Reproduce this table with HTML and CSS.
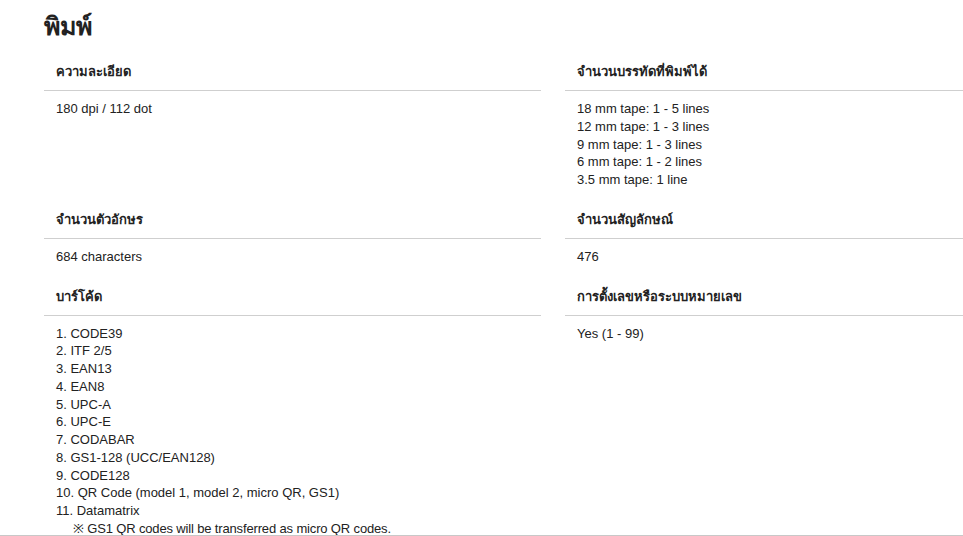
FILE: index.html
```html
<!DOCTYPE html>
<html lang="th">
<head>
<meta charset="utf-8">
<link rel="stylesheet" href="styles.css">
</head>
<body>
<div class="page">
  <h1 class="title">พิมพ์</h1>
  <div class="grid">
    <div class="cell">
      <div class="label">ความละเอียด</div>
      <div class="value">180 dpi / 112 dot</div>
    </div>
    <div class="cell">
      <div class="label">จำนวนบรรทัดที่พิมพ์ได้</div>
      <div class="value">18 mm tape: 1 - 5 lines<br>12 mm tape: 1 - 3 lines<br>9 mm tape: 1 - 3 lines<br>6 mm tape: 1 - 2 lines<br>3.5 mm tape: 1 line</div>
    </div>
    <div class="cell">
      <div class="label">จำนวนตัวอักษร</div>
      <div class="value">684 characters</div>
    </div>
    <div class="cell">
      <div class="label">จำนวนสัญลักษณ์</div>
      <div class="value">476</div>
    </div>
    <div class="cell">
      <div class="label">บาร์โค้ด</div>
      <div class="value">1. CODE39<br>2. ITF 2/5<br>3. EAN13<br>4. EAN8<br>5. UPC-A<br>6. UPC-E<br>7. CODABAR<br>8. GS1-128 (UCC/EAN128)<br>9. CODE128<br>10. QR Code (model 1, model 2, micro QR, GS1)<br>11. Datamatrix<br><span class="note">※ GS1 QR codes will be transferred as micro QR codes.</span></div>
    </div>
    <div class="cell">
      <div class="label">การตั้งเลขหรือระบบหมายเลข</div>
      <div class="value">Yes (1 - 99)</div>
    </div>
  </div>
</div>
</body>
</html>
```

FILE: styles.css
```css
html, body {
  margin: 0;
  padding: 0;
  background: #fff;
}
body {
  font-family: "Liberation Sans", "Noto Sans", sans-serif;
  color: #222;
  font-size: 13px;
  height: 536px;
  overflow: hidden;
  border-bottom: 1px solid #c8c8c8;
  box-sizing: border-box;
}
.page {
  padding-left: 44px;
}
.title {
  margin: 11px 0 13px;
  font-size: 25px;
  line-height: 30px;
  font-weight: bold;
  color: #222;
}
.grid {
  display: grid;
  grid-template-columns: 497px 1fr;
  column-gap: 24px;
}
.label {
  padding: 9px 12px;
  line-height: 18px;
  font-weight: bold;
  border-bottom: 1px solid #cfcfcf;
}
.value {
  padding: 9px 12px 13px;
  line-height: 17.75px;
}
.note {
  padding-left: 17px;
  letter-spacing: -0.15px;
}
```
